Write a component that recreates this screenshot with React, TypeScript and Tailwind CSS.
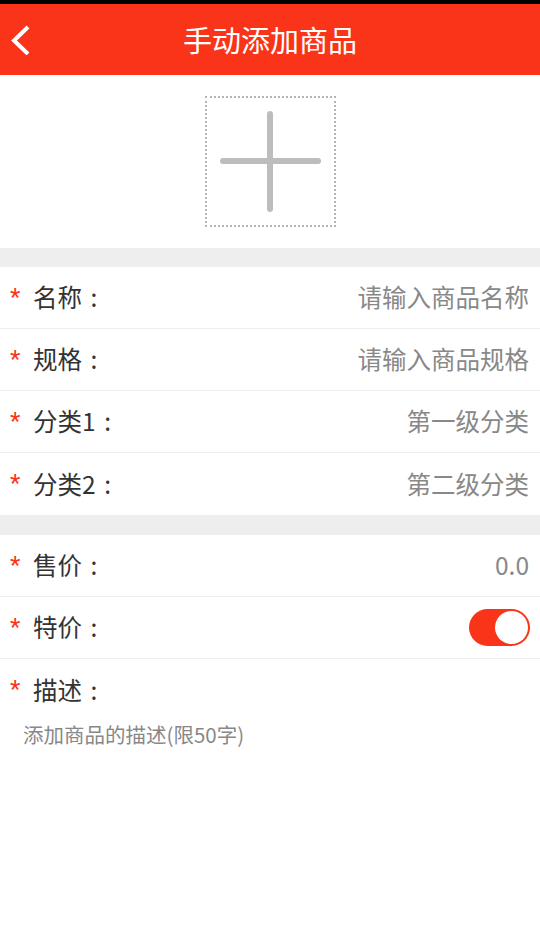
import React from 'react';

const font = { fontFamily: '"Noto Sans CJK SC", "Roboto", sans-serif' };

function Row({ label, value, last }: { label: string; value?: React.ReactNode; last?: boolean }) {
  return (
    <div className={`flex h-[62px] items-center justify-between pr-[11px] ${last ? '' : 'border-b border-[#eeeeee]'}`}>
      <div className="flex items-center text-[24.5px] text-[#333333]">
        <span className="w-[33px] pl-[10px] text-[24px] leading-none text-[#f93419] -mt-[2px]" style={{ fontFamily: 'Roboto, sans-serif' }}>*</span>
        <span>{label}</span>
        <span className="w-[24px] text-center">:</span>
      </div>
      {typeof value === 'string' ? <span className="text-[24.5px] text-[#888888]">{value}</span> : value}
    </div>
  );
}

function Toggle() {
  return (
    <div className="mr-[-1px] flex h-[37px] w-[61px] items-center justify-end rounded-full bg-[#f93419] p-[2px]">
      <div className="h-[33px] w-[33px] rounded-full bg-white" />
    </div>
  );
}

export default function App() {
  return (
    <div className="flex h-[938px] w-[540px] flex-col bg-white" style={font}>
      <div className="h-[4px] bg-black" />
      <div className="relative flex h-[71px] items-center justify-center bg-[#f93419]">
        <svg className="absolute left-[9px] top-[21px]" width="24" height="30" viewBox="0 0 24 30">
          <polyline points="19,2 5,15.5 19,29" fill="none" stroke="#ffffff" strokeWidth="4" />
        </svg>
        <span className="text-[29px] text-white">手动添加商品</span>
      </div>
      <div className="flex h-[173px] items-center justify-center">
        <div className="flex h-[131px] w-[131px] items-center justify-center border-[2px] border-dotted border-[#b4b4b4]">
          <svg width="101" height="101" viewBox="0 0 101 101">
            <line x1="3" y1="50" x2="98" y2="50" stroke="#bdbdbd" strokeWidth="6" strokeLinecap="round" />
            <line x1="50" y1="3" x2="50" y2="98" stroke="#bdbdbd" strokeWidth="6" strokeLinecap="round" />
          </svg>
        </div>
      </div>
      <div className="h-[19px] bg-[#eeeeee]" />
      <Row label="名称" value="请输入商品名称" />
      <Row label="规格" value="请输入商品规格" />
      <Row label="分类1" value="第一级分类" />
      <Row label="分类2" value="第二级分类" last />
      <div className="h-[20px] bg-[#eeeeee]" />
      <Row label="售价" value="0.0" />
      <Row label="特价" value={<Toggle />} />
      <Row label="描述" last />
      <div className="pl-[23px] text-[20.5px] text-[#888888] -mt-[2px]">添加商品的描述(限50字)</div>
    </div>
  );
}
